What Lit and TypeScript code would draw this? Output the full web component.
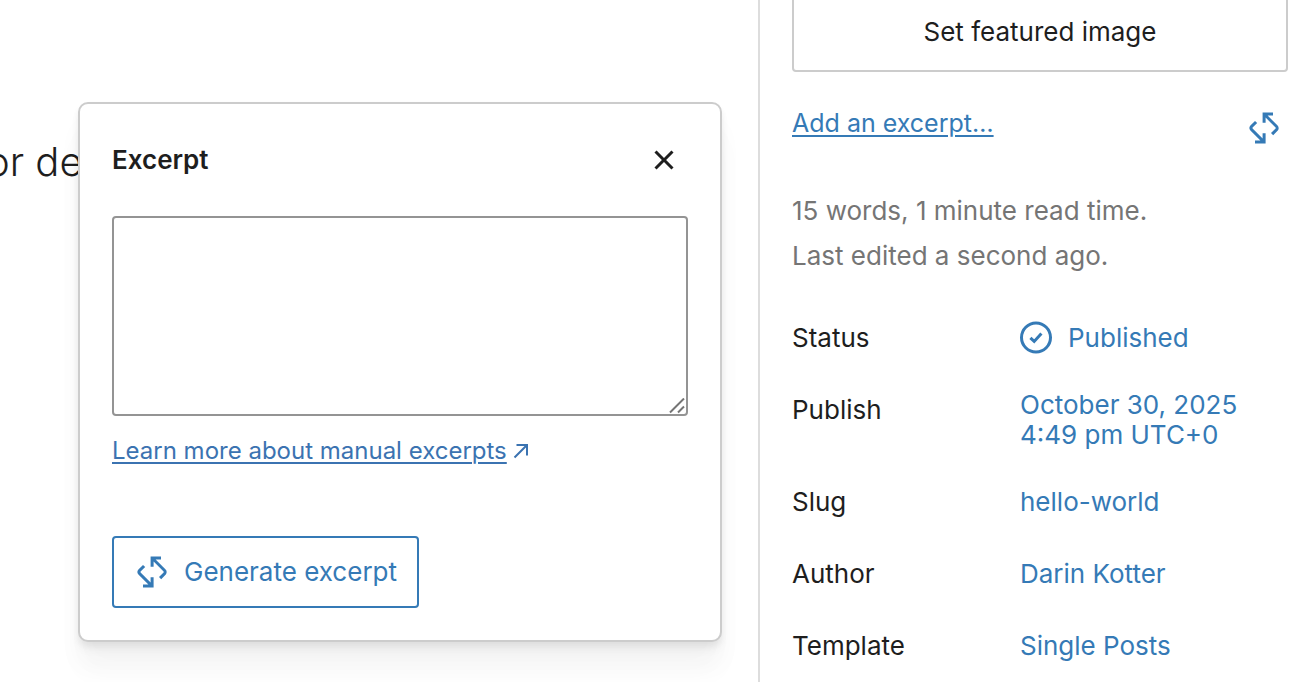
import { LitElement, html, css, svg } from "lit";
import { customElement, state } from "lit/decorators.js";

const updateIcon = svg`<path d="m11.3 17.2-5-5c-.1-.1-.1-.3 0-.4l2.3-2.3-1.1-1-2.3 2.3c-.7.7-.7 1.8 0 2.5l5 5H7.5v1.5h5.3v-5.2h-1.5v2.6zm7.5-6.4-5-5h2.7V4.2h-5.2v5.2h1.5V6.8l5 5c.1.1.1.3 0 .4l-2.3 2.3 1.1 1.1 2.3-2.3c.6-.7.6-1.9-.1-2.5z"/>`;
const closeIcon = svg`<path d="M12 13.06l3.712 3.713 1.061-1.06L13.061 12l3.712-3.712-1.06-1.06L12 10.938 8.288 7.227l-1.061 1.06L10.939 12l-3.712 3.712 1.06 1.061L12 13.061z"/>`;
const publishedIcon = svg`<g fill="none" stroke="currentColor" stroke-width="1.5"><circle cx="12" cy="11.75" r="7.25"/><path d="M9.2 11.9l1.9 1.8 3.6-4"/></g>`;

const icon = (shape: unknown) =>
  html`<svg class="icon" viewBox="0 0 24 24" fill="currentColor" aria-hidden="true">${shape}</svg>`;

interface Row {
  label: string;
  lines: string[];
  published?: boolean;
}

const rows: Row[] = [
  { label: "Status", lines: ["Published"], published: true },
  { label: "Publish", lines: ["October 30, 2025", "4:49 pm UTC+0"] },
  { label: "Slug", lines: ["hello-world"] },
  { label: "Author", lines: ["Darin Kotter"] },
  { label: "Template", lines: ["Single Posts"] },
];

@customElement("app-root")
export class AppRoot extends LitElement {
  @state() private open = true;

  static styles = css`
    :host {
      display: flex;
      min-height: 100vh;
      height: 100vh;
      overflow: hidden;
      background: #fff;
      color: #1e1e1e;
      font: 26px/30px Inter, "Liberation Sans", sans-serif;
      --accent: #357ab6;
    }
    * { box-sizing: border-box; }
    button {
      font: inherit;
      color: inherit;
      background: none;
      border: 0;
      padding: 0;
      cursor: pointer;
    }
    .icon { display: block; width: 48px; height: 48px; flex: none; }
    .canvas { position: relative; flex: 1; min-width: 0; overflow: hidden; }
    .content {
      margin: 138px 0 0 -14px;
      font-size: 40px;
      line-height: 48px;
      font-weight: 300;
      white-space: nowrap;
    }
    .popover {
      position: absolute;
      top: 102px;
      left: 78px;
      right: 36px;
      padding: 32px;
      display: flex;
      flex-direction: column;
      align-items: flex-start;
      background: #fff;
      border: 2px solid #ccc;
      border-radius: 10px;
      box-shadow: 0 4px 6px #0000000d, 0 8px 10px #0000000a,
        0 24px 24px #00000008, 0 32px 32px #00000005;
    }
    .head {
      align-self: stretch;
      display: flex;
      align-items: center;
      justify-content: space-between;
      height: 48px;
      margin-bottom: 32px;
    }
    h2 { margin: 0; font-size: 26px; line-height: 30px; font-weight: 600; }
    textarea {
      display: block;
      width: 100%;
      height: 200px;
      padding: 12px 16px;
      border: 2px solid #949494;
      border-radius: 4px;
      background: #fff;
      font: inherit;
      color: inherit;
      resize: none;
      outline: none;
    }
    .field { position: relative; align-self: stretch; }
    .grip {
      position: absolute;
      right: 3px;
      bottom: 2px;
      width: 16px;
      height: 16px;
      pointer-events: none;
    }
    .more {
      display: flex;
      align-items: center;
      gap: 6px;
      margin: 20px 0 70px;
      font-size: 24px;
      color: #3b73b1;
      text-decoration: none;
      white-space: nowrap;
    }
    .more span, .add { text-decoration: underline; text-decoration-thickness: 2px; text-underline-offset: 3px; }
    .arrow { width: 16px; height: 16px; }
    .generate {
      display: flex;
      align-items: center;
      gap: 8px;
      height: 72px;
      padding: 0 20px 0 14px;
      border: 2px solid var(--accent);
      border-radius: 4px;
      color: var(--accent);
      white-space: nowrap;
    }
    .sidebar {
      width: 556px;
      flex: none;
      padding: 0 26px 0 32px;
      border-left: 2px solid #ddd;
    }
    .featured {
      display: block;
      width: 100%;
      height: 80px;
      margin-top: -8px;
      border: 2px solid #ccc;
      border-radius: 4px;
    }
    .excerpt {
      display: flex;
      align-items: center;
      justify-content: space-between;
      height: 48px;
      margin: 32px 0 36px;
      color: var(--accent);
    }
    .add { padding-bottom: 10px; font-size: 25px; }
    .info { margin: 0; line-height: 45px; color: #757575; }
    dl { margin: 28px 0 0; display: grid; gap: 8px; }
    .row { display: grid; grid-template-columns: 228px 1fr; }
    dt { padding: 17px 0; }
    dd { margin: 0; padding: 12px 0; min-height: 64px; display: flex; align-items: center; color: var(--accent); }
    .value { text-align: left; display: flex; flex-direction: column; }
    .status { flex-direction: row; align-items: center; gap: 8px; height: 40px; margin-left: -8px; }
  `;

  render() {
    return html`
      <main class="canvas">
        <p class="content">or de</p>
        ${this.open
          ? html`<section class="popover" role="dialog" aria-labelledby="title">
              <div class="head">
                <h2 id="title">Excerpt</h2>
                <button type="button" aria-label="Close" @click=${() => (this.open = false)}>
                  ${icon(closeIcon)}
                </button>
              </div>
              <div class="field">
                <textarea aria-labelledby="title"></textarea>
                <svg class="grip" viewBox="0 0 16 16" fill="none" stroke="#757575" stroke-width="2" aria-hidden="true">
                  <path d="M1 14.5 15 0.5M9 14.5l6-6" />
                </svg>
              </div>
              <a class="more" href="#excerpts">
                <span>Learn more about manual excerpts</span>
                <svg class="arrow" viewBox="0 0 16 16" fill="none" stroke="currentColor" stroke-width="2" aria-hidden="true">
                  <path d="M3.5 2H14v10.5M14 2 1.5 14.5" />
                </svg>
              </a>
              <button type="button" class="generate">${icon(updateIcon)}<span>Generate excerpt</span></button>
            </section>`
          : null}
      </main>
      <aside class="sidebar">
        <button type="button" class="featured">Set featured image</button>
        <div class="excerpt">
          <button type="button" class="add" @click=${() => (this.open = true)}>Add an excerpt…</button>
          <button type="button" aria-label="Generate excerpt">${icon(updateIcon)}</button>
        </div>
        <p class="info">15 words, 1 minute read time.</p>
        <p class="info">Last edited a second ago.</p>
        <dl>
          ${rows.map(
            (row) => html`<div class="row">
              <dt>${row.label}</dt>
              <dd>
                <button type="button" class="value ${row.published ? "status" : ""}">
                  ${row.published ? icon(publishedIcon) : null}
                  ${row.lines.map((line) => html`<span>${line}</span>`)}
                </button>
              </dd>
            </div>`
          )}
        </dl>
      </aside>
    `;
  }
}
